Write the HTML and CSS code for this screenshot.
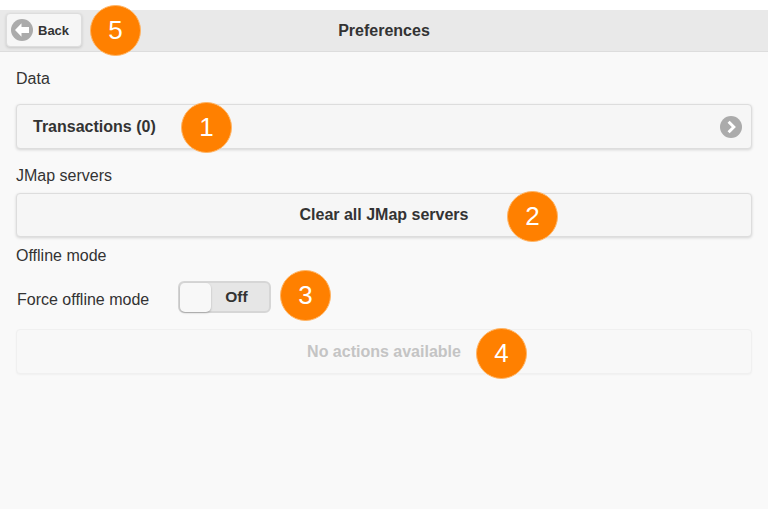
FILE: index.html
```html
<!DOCTYPE html>
<html lang="en">
<head>
  <title>Preferences</title>
  <meta charset="utf-8">
  <link rel="stylesheet" href="styles.css">
</head>
<body>
  <header class="header">
    <a class="back-button">
      <svg class="icon" viewBox="0 0 22 22" width="22" height="22">
        <circle cx="11" cy="11" r="11" fill="#ababab"/>
        <path d="M10.5 4.2 L4 11 L10.5 17.8 V14 H18 V8 H10.5 Z" fill="#fff"/>
      </svg>
      Back
    </a>
    <span class="badge badge-5">5</span>
    <h1>Preferences</h1>
  </header>
  <main class="content">
    <h2 class="label label-data">Data</h2>
    <div class="button button-list">
      Transactions (0)
      <svg class="icon" viewBox="0 0 22 22" width="22" height="22">
        <circle cx="11" cy="11" r="11" fill="#ababab"/>
        <path d="M8.6 5.8 L13.8 11 L8.6 16.2" fill="none" stroke="#fff" stroke-width="3"/>
      </svg>
      <span class="badge badge-1">1</span>
    </div>
    <h2 class="label label-jmap">JMap servers</h2>
    <div class="button button-clear">
      Clear all JMap servers
      <span class="badge badge-2">2</span>
    </div>
    <h2 class="label label-offline">Offline mode</h2>
    <div class="switch-row">
      <span class="switch-label">Force offline mode</span>
      <div class="switch">
        <span class="switch-knob"></span>
        <span class="switch-text">Off</span>
      </div>
      <span class="badge badge-3">3</span>
    </div>
    <div class="button button-disabled">
      No actions available
      <span class="badge badge-4">4</span>
    </div>
  </main>
</body>
</html>
```

FILE: styles.css
```css
*, *::before, *::after {
  margin: 0;
  padding: 0;
  box-sizing: border-box;
}

html {
  font-size: 16px;
}

body {
  position: relative;
  min-height: 509px;
  padding-top: 10px;
  background: linear-gradient(#ffffff 10px, #f9f9f9 10px);
  color: #333333;
  font-family: "Liberation Sans", Arial, sans-serif;
  overflow: hidden;
}

.header {
  display: flex;
  justify-content: center;
  align-items: center;
  position: relative;
  height: 42px;
  border-bottom: 1px solid #dddddd;
  background-color: #e9e9e9;
}

h1 {
  font-size: 16px;
  font-weight: 700;
  color: #333333;
}

.back-button {
  display: flex;
  align-items: center;
  gap: 5px;
  position: absolute;
  top: 3px;
  left: 6px;
  width: 76px;
  height: 34px;
  padding-left: 4px;
  border: 1px solid #dddddd;
  border-radius: 4px;
  background-color: #f6f6f6;
  box-shadow: 0 1px 3px rgba(0, 0, 0, 0.15);
  font-size: 13px;
  font-weight: 700;
}

.content {
  padding: 0 16px;
}

.label {
  font-size: 16px;
  font-weight: 400;
  line-height: 16px;
}

.label-data {
  margin: 19px 0 17px;
}

.label-jmap {
  margin: 19px 0 9px;
}

.label-offline {
  margin: 11px 0 0;
}

.button {
  display: flex;
  justify-content: center;
  align-items: center;
  position: relative;
  height: 45px;
  border: 1px solid #dddddd;
  border-radius: 4px;
  background-color: #f6f6f6;
  box-shadow: 0 1px 3px rgba(0, 0, 0, 0.15);
  font-size: 16px;
  font-weight: 700;
}

.button-list {
  justify-content: space-between;
  padding: 0 9px 0 16px;
}

.button-clear {
  height: 44px;
}

.button-disabled {
  border-color: #f0f0f0;
  background-color: #f8f8f8;
  box-shadow: 0 1px 2px rgba(0, 0, 0, 0.04);
  color: #c4c4c4;
}

.switch-row {
  display: flex;
  align-items: center;
  position: relative;
  height: 32px;
  margin: 17px 0 16px;
}

.switch-label {
  width: 162px;
  padding-left: 1px;
  padding-top: 5px;
  font-size: 16px;
}

.switch {
  display: flex;
  align-items: center;
  width: 93px;
  height: 32px;
  border: 2px solid #d6d6d6;
  border-radius: 6px;
  background-color: #e6e6e6;
}

.switch-knob {
  width: 31px;
  height: 29px;
  border-radius: 5px;
  background-color: #f8f8f8;
  box-shadow: 0 1px 2px rgba(0, 0, 0, 0.25);
}

.switch-text {
  flex: 1;
  padding-right: 7px;
  text-align: center;
  font-size: 15.5px;
  font-weight: 700;
}

.badge {
  display: flex;
  justify-content: center;
  align-items: center;
  position: absolute;
  width: 51px;
  height: 51px;
  border: 1px solid #ffb566;
  border-radius: 50%;
  background-color: #ff8000;
  color: #ffffff;
  font-size: 26px;
  font-weight: 400;
}

.badge-5 {
  top: -5px;
  left: 90px;
}

.badge-1 {
  top: -3px;
  left: 164px;
}

.badge-2 {
  top: -3px;
  left: 490px;
}

.badge-3 {
  top: -11px;
  left: 264px;
}

.badge-4 {
  top: -2px;
  left: 459px;
}
```
